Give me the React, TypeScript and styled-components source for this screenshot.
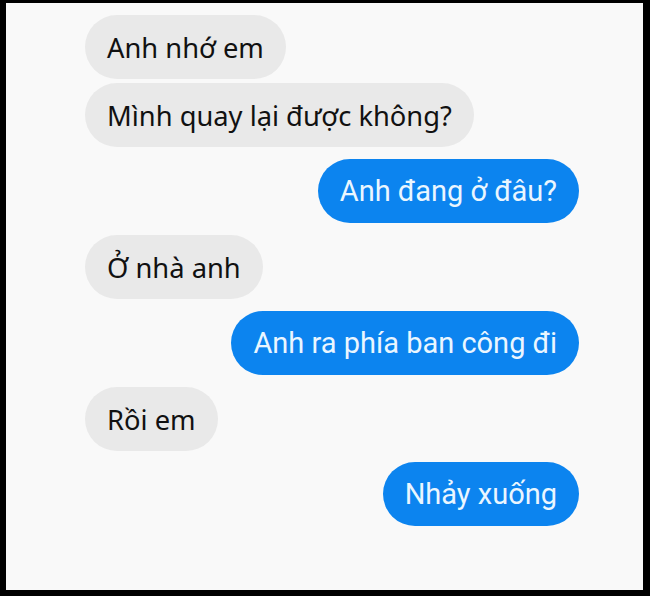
import React from "react";
import styled, { createGlobalStyle } from "styled-components";

const Global = createGlobalStyle`
  html, body { margin: 0; padding: 0; background: #000; }
  body { font-family: Roboto, "Noto Sans", sans-serif; }
`;

const Frame = styled.div`
  width: 650px;
  height: 596px;
  box-sizing: border-box;
  background: #000;
  padding: 3px 7px 6px 6px;
`;

const Screen = styled.div`
  width: 100%;
  height: 100%;
  background: #f9f9f9;
  box-sizing: border-box;
  padding: 12px 64px 0 79px;
  display: flex;
  flex-direction: column;
`;

const Row = styled.div<{ $mine: boolean; $top: number }>`
  display: flex;
  justify-content: ${(p) => (p.$mine ? "flex-end" : "flex-start")};
  margin-top: ${(p) => p.$top}px;
`;

const Bubble = styled.div<{ $mine: boolean }>`
  height: 64px;
  box-sizing: border-box;
  padding: 0 22px;
  border-radius: 32px;
  display: flex;
  align-items: center;
  font-family: ${(p) =>
    p.$mine ? 'Roboto, "Noto Sans", sans-serif' : '"Noto Sans", Roboto, sans-serif'};
  font-size: ${(p) => (p.$mine ? "29px" : "27.3px")};
  background: ${(p) => (p.$mine ? "#0c84ef" : "#e9e9e9")};
  color: ${(p) => (p.$mine ? "#eaf6ff" : "#111")};
`;

const messages: { text: string; mine: boolean; top: number }[] = [
  { text: "Anh nhớ em", mine: false, top: 0 },
  { text: "Mình quay lại được không?", mine: false, top: 4 },
  { text: "Anh đang ở đâu?", mine: true, top: 12 },
  { text: "Ở nhà anh", mine: false, top: 12 },
  { text: "Anh ra phía ban công đi", mine: true, top: 12 },
  { text: "Rồi em", mine: false, top: 12 },
  { text: "Nhảy xuống", mine: true, top: 11 },
];

export default function App() {
  return (
    <>
      <Global />
      <Frame>
        <Screen>
          {messages.map((m, i) => (
            <Row key={i} $mine={m.mine} $top={m.top}>
              <Bubble $mine={m.mine}>{m.text}</Bubble>
            </Row>
          ))}
        </Screen>
      </Frame>
    </>
  );
}
